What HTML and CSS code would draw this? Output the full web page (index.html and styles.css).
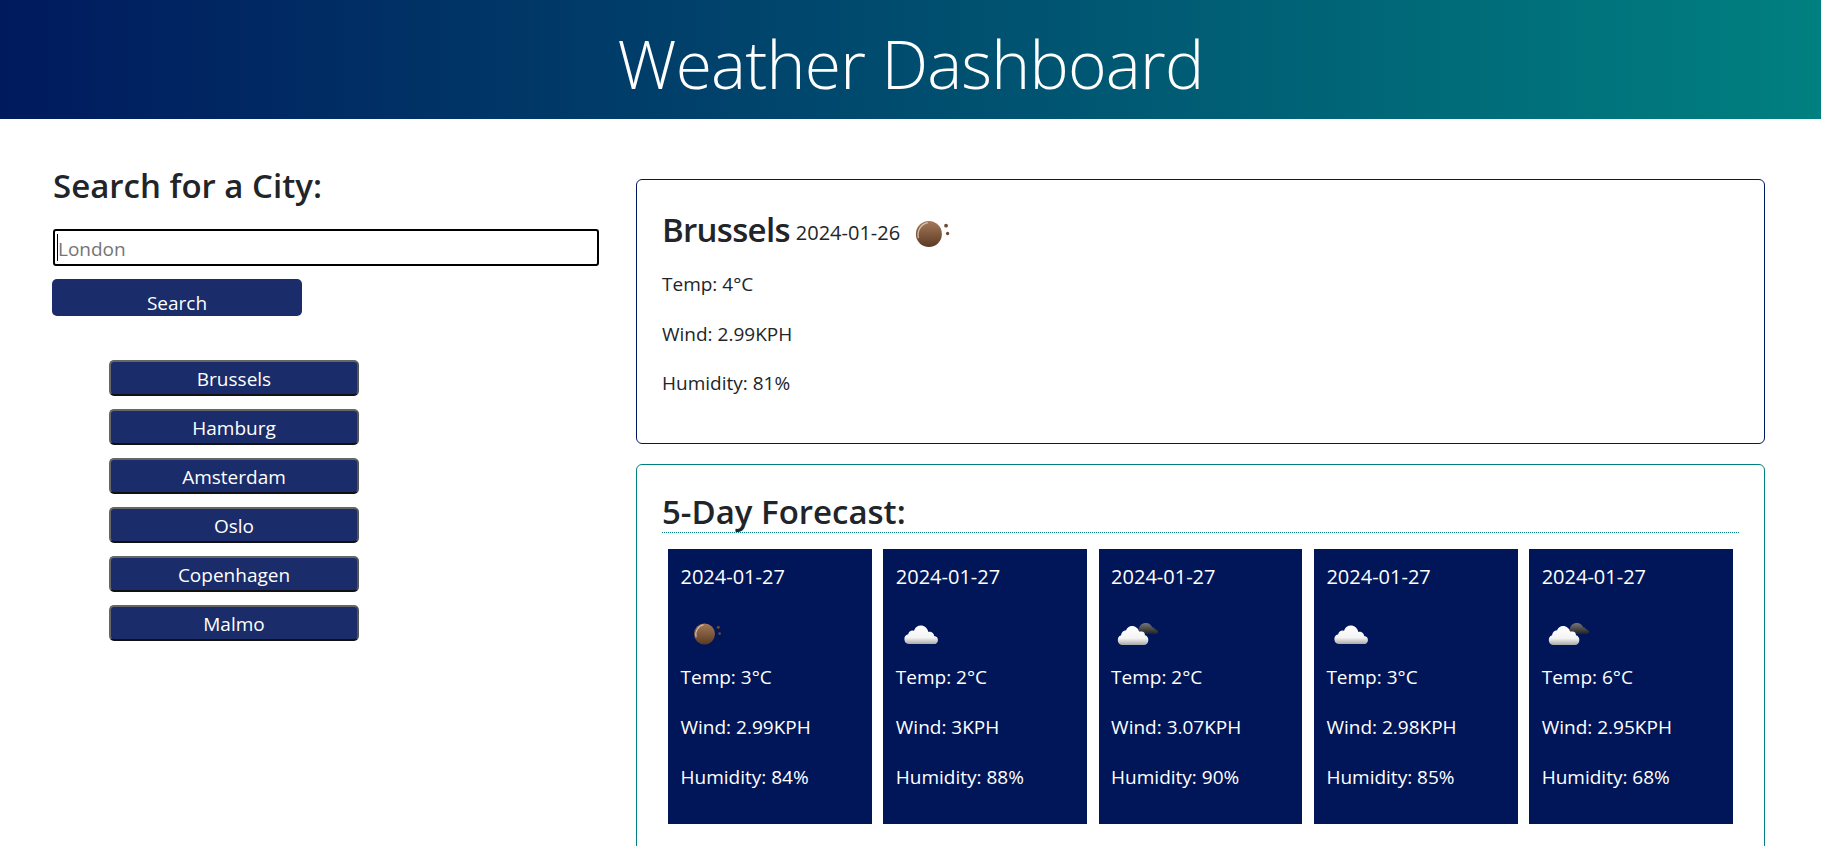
FILE: index.html
```html
<!DOCTYPE html>
<html>
<head>
	<meta charset="UTF-8">
	<title>Weather Dashboard</title>
	<link rel="stylesheet" href="styles.css">
</head>
<body>
	<svg class="defs" width="0" height="0">
		<defs>
			<linearGradient id="moonFill" x1="0" y1="0" x2="0" y2="1">
				<stop offset="0" stop-color="#a5795a"/>
				<stop offset="1" stop-color="#5a3a22"/>
			</linearGradient>
			<linearGradient id="cloudFill" x1="0" y1="0" x2="0" y2="1">
				<stop offset="0" stop-color="#ffffff"/>
				<stop offset=".65" stop-color="#f4f4f4"/>
				<stop offset="1" stop-color="#a9a9a9"/>
			</linearGradient>
			<linearGradient id="darkFill" x1="0" y1="0" x2="0" y2="1">
				<stop offset="0" stop-color="#777"/>
				<stop offset="1" stop-color="#222"/>
			</linearGradient>
			<symbol id="moon" viewBox="0 0 50 50">
				<circle cx="22" cy="25" r="12.5" fill="url(#moonFill)"/>
				<path d="M12 29a12 12 0 0 1 9-15" fill="none" stroke="#d8c2b0" stroke-width="1.2"/>
				<circle cx="38.500" cy="17" r="1.800" fill="#6b4a32"/>
				<circle cx="40" cy="24.500" r="1.600" fill="#6b4a32"/>
			</symbol>
			<symbol id="cloud" viewBox="0 0 50 50">
				<path d="M10 37a6 6 0 0 1-1.500-11.800a6 6 0 0 1 7-4.200c1.500-4 4.500-6 8-6c4.500 0 8 3 9 7.500c.5-.2 3-.2 4 .5c2 1 3 3 3 4.500c3 .2 4.500 2.500 4.500 4.500c0 3-2 5-5 5z" fill="url(#cloudFill)"/>
			</symbol>
			<symbol id="clouds" viewBox="0 0 50 50">
				<path d="M27 19c1-5 5-7 9-7c3 0 6 2 7 5c2 0 3 1 3 2c2 .5 4 2 4 3.500c0 1.500-1 2.500-3 2.500h-20z" fill="url(#darkFill)"/>
				<path d="M7 38a6 6 0 0 1-1-11.500a7 7 0 0 1 6-6c1-3 4-5 7-5c4.500 0 7.500 3 8.500 6.500h3c2.500 0 4 2 4 4.500c2.500 .5 4 3 4 5.500c0 3.500-2 6-5.500 6z" fill="url(#cloudFill)"/>
			</symbol>
		</defs>
	</svg>

	<header class="top">
		<h1>Weather Dashboard</h1>
	</header>

	<main class="page">
		<section class="side">
			<h2>Search for a City:</h2>
			<div class="field">
				<input class="city" placeholder="London">
				<span class="caret"></span>
			</div>
			<button class="go">Search</button>
			<div class="history">
				<button>Brussels</button>
				<button>Hamburg</button>
				<button>Amsterdam</button>
				<button>Oslo</button>
				<button>Copenhagen</button>
				<button>Malmo</button>
			</div>
		</section>

		<section class="results">
			<div class="today">
				<div class="today-head">
					<span class="name">Brussels</span>
					<span class="stamp">2024-01-26</span>
					<svg class="big-icon"><use href="#moon"/></svg>
				</div>
				<p>Temp: 4°C</p>
				<p>Wind: 2.99KPH</p>
				<p>Humidity: 81%</p>
			</div>

			<div class="forecast">
				<h2>5-Day Forecast:</h2>
				<div class="days">
					<div class="day">
						<p class="stamp-small">2024-01-27</p>
						<svg class="icon"><use href="#moon"/></svg>
						<p>Temp: 3°C</p>
						<p>Wind: 2.99KPH</p>
						<p>Humidity: 84%</p>
					</div>
					<div class="day">
						<p class="stamp-small">2024-01-27</p>
						<svg class="icon"><use href="#cloud"/></svg>
						<p>Temp: 2°C</p>
						<p>Wind: 3KPH</p>
						<p>Humidity: 88%</p>
					</div>
					<div class="day">
						<p class="stamp-small">2024-01-27</p>
						<svg class="icon"><use href="#clouds"/></svg>
						<p>Temp: 2°C</p>
						<p>Wind: 3.07KPH</p>
						<p>Humidity: 90%</p>
					</div>
					<div class="day">
						<p class="stamp-small">2024-01-27</p>
						<svg class="icon"><use href="#cloud"/></svg>
						<p>Temp: 3°C</p>
						<p>Wind: 2.98KPH</p>
						<p>Humidity: 85%</p>
					</div>
					<div class="day">
						<p class="stamp-small">2024-01-27</p>
						<svg class="icon"><use href="#clouds"/></svg>
						<p>Temp: 6°C</p>
						<p>Wind: 2.95KPH</p>
						<p>Humidity: 68%</p>
					</div>
				</div>
			</div>
		</section>
	</main>
</body>
</html>
```

FILE: styles.css
```css
html{overflow: hidden;}
body{margin: 0; height: 846px; overflow: hidden; font-family: "Open Sans", "Noto Sans", sans-serif; font-size: 19px; color: #212529;}
.defs{display: block; height: 0;}
p{margin: 0;}

.top{height: 119px; display: flex; justify-content: center; align-items: center;
	background: linear-gradient(to right, #001a5e, #008080); color: #fff;}
.top h1{margin: 0; padding-top: 6px; font-size: 66px; font-weight: 300; line-height: 1; letter-spacing: -0.8px;}

.page{display: flex; padding: 47px 56px 0 52px; align-items: flex-start;}
.side{width: 584px; flex: none;}
.side h2{margin: 0 0 23px 1px; font-size: 33px; font-weight: 600; line-height: 40px;}

.field{position: relative; margin-left: 1px; width: 546px;}
.city{display: block; box-sizing: border-box; width: 100%; height: 37px; border: 2px solid #000; border-radius: 3px;
	padding: 3px 3px 1px; font: inherit; outline: none;}
.city::placeholder{color: #757575;}
.caret{position: absolute; left: 4px; top: 5px; width: 1px; height: 27px; background: #000;}

.go{display: block; box-sizing: border-box; width: 250px; height: 37px; margin-top: 13px; padding: 10px 0 0;
	border: 0; border-radius: 5px; background: #1a2c69; color: #fff; font: inherit; line-height: 28px;}

.history{display: flex; flex-direction: column; gap: 13px; margin: 44px 0 0 57px; width: 250px;}
.history button{box-sizing: border-box; height: 36px; padding: 1px 0 0; border: 2px solid; border-color: #666 #555 #111 #666;
	border-radius: 5px; background: #1a2c69; color: #fff; font: inherit;}

.results{flex: 1; display: flex; flex-direction: column; gap: 20px; padding-top: 13px;}
.today{box-sizing: border-box; height: 265px; padding: 24px 25px 0; border: 1px solid #001a5e; border-radius: 6px;}
.today-head{display: flex; align-items: center; height: 50px; margin-bottom: 15px;}
.name{font-size: 33px; font-weight: 600; letter-spacing: -0.7px;}
.stamp{margin-left: 6px; padding-top: 7px; font-size: 20px;}
.big-icon{width: 52px; height: 52px; flex: none; margin: 9px 0 0 6px;}
.today p{margin-bottom: 19.5px; line-height: 30px;}

.forecast{padding: 26px 25px 30px; border: 1px solid #008080; border-radius: 6px;}
.forecast h2{margin: 0 0 16px; font-size: 33px; font-weight: 600; line-height: 41px;
	border-bottom: 1px dotted #008080;}
.days{display: flex; gap: 11.5px; padding: 0 6px;}
.day{flex: 1; height: 275px; box-sizing: border-box; padding: 13px 12.5px; background: #001659; color: #fff;}
.day p{line-height: 30px; margin-bottom: 20px;}
.day .stamp-small{margin-bottom: 21px; font-size: 20px;}
.icon{display: block; width: 42px; height: 42px; margin: 0 0 7px 5px;}
```
